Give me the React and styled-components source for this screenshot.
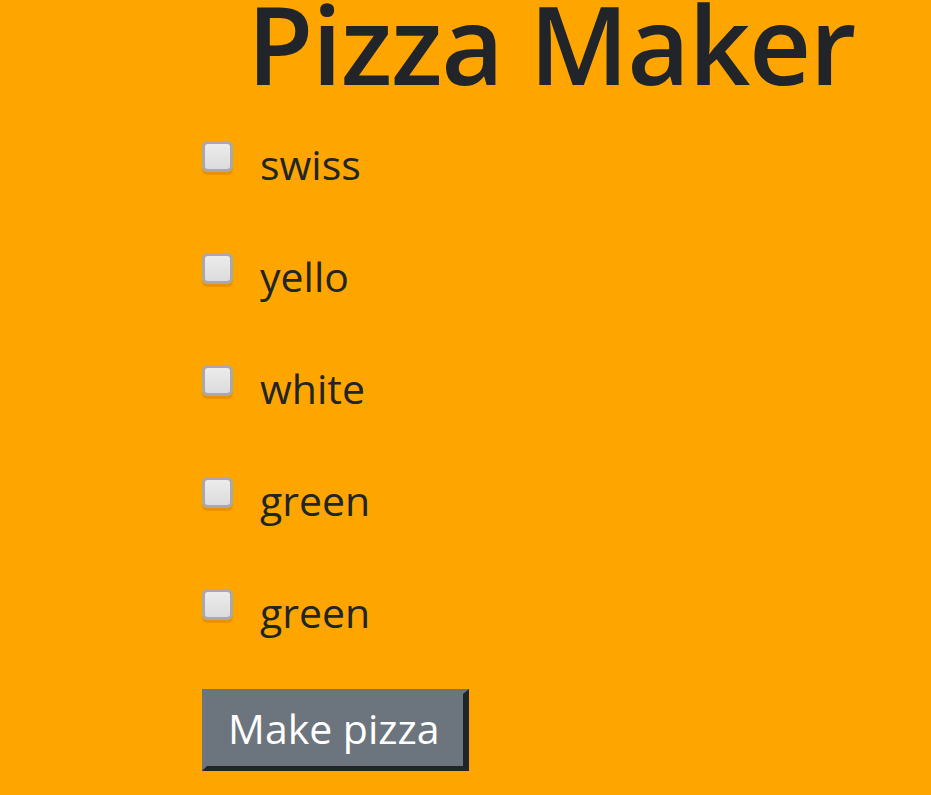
import React from 'react'
import styled, { createGlobalStyle } from 'styled-components'

const GlobalStyle = createGlobalStyle`
	html, body {
		margin: 0;
		padding: 0;
		background: #ffa500;
	}
	body {
		font-family: "Open Sans", "Noto Sans", sans-serif;
		color: #212529;
	}
`

const Page = styled.main`
	min-height: 795px;
	padding: 0 0 0 202px;
	overflow: hidden;
`

const Title = styled.h1`
	margin: 0 0 0 45px;
	font-size: 108px;
	font-weight: 600;
	line-height: 0.82;
	white-space: nowrap;
	letter-spacing: -1.4px;
`

const List = styled.div`
	display: flex;
	flex-direction: column;
	margin-top: 52px;
`

const Row = styled.label`
	display: flex;
	align-items: flex-start;
	height: 112px;
	cursor: pointer;
`

const Check = styled.input`
	appearance: none;
	flex: none;
	width: 31px;
	height: 31px;
	margin: 0;
	border: 3px solid #a9a9a9;
	border-radius: 6px;
	background: linear-gradient(#ececec, #dcdcdc);
	box-shadow: 0 3px 1px rgba(120, 60, 0, 0.18);
	box-sizing: border-box;
	cursor: pointer;

	&:checked {
		background: linear-gradient(#ffffff, #d0d0d0);
	}
`

const Text = styled.span`
	margin: 3px 0 0 27px;
	font-size: 41px;
	line-height: 41px;
`

const Button = styled.button`
	margin-top: -12px;
	padding: 6px 23px 9px 21px;
	font-family: "Open Sans", "Noto Sans", sans-serif;
	font-size: 41px;
	line-height: 57px;
	color: #ffffff;
	background: #6c757d;
	border-style: solid;
	border-width: 5px 6px 5px 5px;
	border-color: #6c757d #212529 #212529 #6c757d;
	border-radius: 0;
	cursor: pointer;
`

const toppings = ['swiss', 'yello', 'white', 'green', 'green']

const App = () => (
	<Page>
		<GlobalStyle />
		<Title>Pizza Maker</Title>
		<List>
			{toppings.map((name, i) => (
				<Row key={i}>
					<Check type="checkbox" />
					<Text>{name}</Text>
				</Row>
			))}
		</List>
		<Button type="button">Make pizza</Button>
	</Page>
)

export default App
